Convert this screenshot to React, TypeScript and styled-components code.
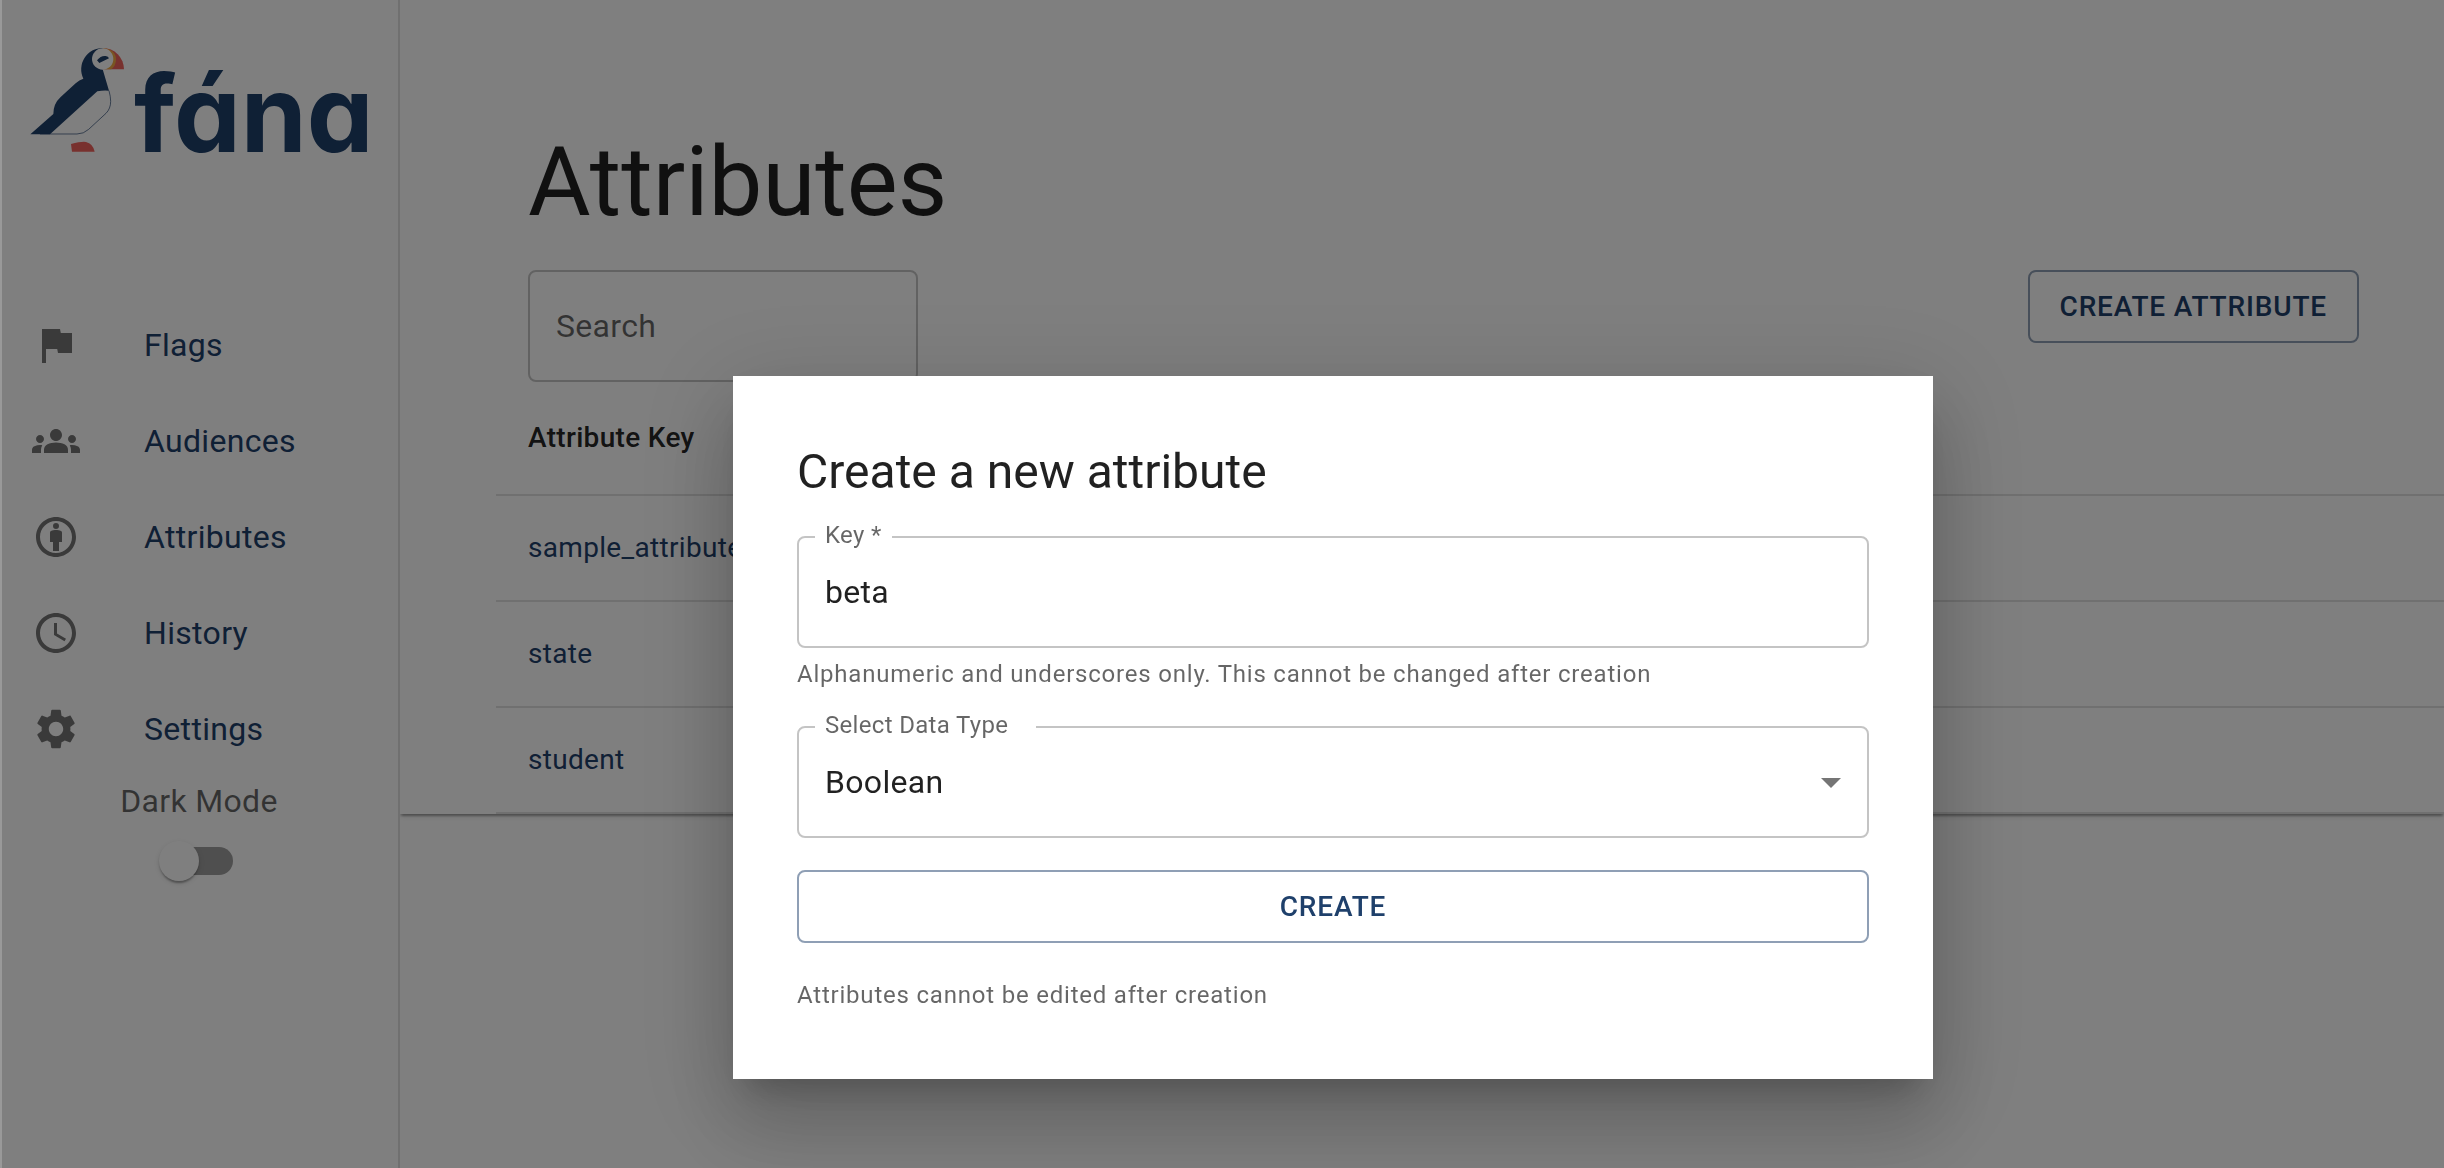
import React, { useState } from "react";
import styled, { createGlobalStyle, css } from "styled-components";

const color = {
  primary: "#1f406b",
  primaryBorder: "rgba(31, 64, 107, 0.5)",
  text: "rgba(0, 0, 0, 0.87)",
  textMuted: "rgba(0, 0, 0, 0.6)",
  icon: "rgba(0, 0, 0, 0.54)",
  outline: "rgba(0, 0, 0, 0.23)",
  divider: "#e0e0e0",
};

const GlobalStyle = createGlobalStyle`
  *, *::before, *::after { box-sizing: border-box; }
  body {
    margin: 0;
    background: #fff;
    color: ${color.text};
    font-family: Roboto, "Liberation Sans", sans-serif;
    font-size: 32px;
    line-height: 48px;
    letter-spacing: 0.01em;
    overflow: hidden;
  }
  button, input, select { font: inherit; letter-spacing: inherit; color: inherit; }
`;

const Shell = styled.div`
  display: flex;
  align-items: stretch;
  min-height: 100vh;
`;

const Sidebar = styled.aside`
  position: relative;
  z-index: 1;
  display: flex;
  flex-direction: column;
  flex: 0 0 400px;
  background: #fff;
  border-right: 2px solid ${color.divider};
`;

const Brand = styled.a`
  display: block;
  padding: 47px 0 0 30px;
  height: 297px;
`;

const NavList = styled.ul`
  list-style: none;
  margin: 0;
  padding: 0;
`;

const NavLink = styled.a`
  display: flex;
  align-items: center;
  height: 96px;
  padding: 0 32px;
  color: ${color.primary};
  text-decoration: none;
`;

const NavIcon = styled.svg`
  flex: none;
  width: 48px;
  height: 48px;
  margin-right: 64px;
  fill: ${color.icon};
`;

const ThemeToggle = styled.label`
  display: flex;
  flex-direction: column;
  align-items: center;
  color: ${color.textMuted};
`;

const Switch = styled.input`
  appearance: none;
  display: flex;
  align-items: center;
  width: 68px;
  height: 28px;
  margin: 22px 0;
  border-radius: 14px;
  background: #9e9e9e;

  &::before {
    content: "";
    flex: none;
    width: 40px;
    height: 40px;
    margin-left: -6px;
    border-radius: 50%;
    background: #fff;
    box-shadow: 0 4px 2px -2px rgba(0, 0, 0, 0.2), 0 2px 2px rgba(0, 0, 0, 0.14),
      0 2px 6px rgba(0, 0, 0, 0.12);
  }
  &:checked::before {
    margin-left: 34px;
  }
`;

const Main = styled.main`
  flex: 1;
  min-width: 0;
`;

const Paper = styled.section`
  padding: 126px 0 0 96px;
  box-shadow: 0 4px 2px -2px rgba(0, 0, 0, 0.2), 0 2px 2px rgba(0, 0, 0, 0.14),
    0 2px 6px rgba(0, 0, 0, 0.12);
`;

const PageTitle = styled.h1`
  margin: 0 0 32px;
  padding-left: 32px;
  font-size: 96px;
  line-height: 112px;
  font-weight: 400;
  letter-spacing: 0;
`;

const Toolbar = styled.div`
  display: flex;
  justify-content: space-between;
  align-items: flex-start;
  padding: 0 85px 0 32px;
`;

const outlined = css`
  height: 112px;
  padding: 0 26px;
  border: 2px solid ${color.outline};
  border-radius: 8px;
  background: transparent;
  outline: none;
`;

const SearchInput = styled.input`
  ${outlined}
  width: 390px;

  &::placeholder {
    color: ${color.textMuted};
    opacity: 1;
  }
`;

const OutlineButton = styled.button<{ $block?: boolean }>`
  width: ${(p) => (p.$block ? "100%" : "auto")};
  padding: 10px 30px;
  border: 2px solid ${color.primaryBorder};
  border-radius: 8px;
  background: transparent;
  color: ${color.primary};
  font-size: 28px;
  line-height: 49px;
  font-weight: 500;
  letter-spacing: 0.03em;
  text-transform: uppercase;
`;

const Table = styled.table`
  width: 100%;
  border-collapse: separate;
  border-spacing: 0;
  font-size: 28px;
  text-align: left;
`;

const HeadCell = styled.th`
  padding: 32px;
  border-bottom: 2px solid ${color.divider};
  line-height: 48px;
  font-weight: 500;
`;

const Cell = styled.td`
  padding: 32px;
  border-bottom: 2px solid ${color.divider};
  line-height: 40px;
`;

const KeyLink = styled.a`
  color: ${color.primary};
  text-decoration: none;
`;

const Backdrop = styled.div`
  position: fixed;
  inset: 0;
  z-index: 2;
  display: flex;
  justify-content: center;
  align-items: center;
  padding: 287px 0 0 220px;
  border-left: 2px solid rgba(255, 255, 255, 0.2);
  background: rgba(0, 0, 0, 0.5);
`;

const Dialog = styled.form`
  display: flex;
  flex-direction: column;
  gap: 32px;
  width: 1200px;
  padding: 64px;
  background: #fff;
  box-shadow: 0 22px 30px -14px rgba(0, 0, 0, 0.2),
    0 48px 76px 6px rgba(0, 0, 0, 0.14), 0 18px 92px 16px rgba(0, 0, 0, 0.12);
`;

const DialogTitle = styled.h2`
  margin: 0;
  font-size: 48px;
  line-height: 64px;
  font-weight: 400;
  letter-spacing: 0;
`;

const Field = styled.div`
  position: relative;
  display: flex;
  flex-direction: column;
  gap: 6px;
`;

const FieldLabel = styled.label<{ $wide?: boolean }>`
  position: absolute;
  top: -13px;
  left: 18px;
  padding: 0 ${(p) => (p.$wide ? 28 : 10)}px 0 10px;
  background: #fff;
  color: ${color.textMuted};
  font-size: 24px;
  line-height: 24px;
`;

const TextInput = styled.input`
  ${outlined}
  width: 100%;
`;

const SelectInput = styled.select`
  ${outlined}
  appearance: none;
  width: 100%;
`;

const SelectArrow = styled.svg`
  position: absolute;
  top: 32px;
  right: 14px;
  width: 48px;
  height: 48px;
  fill: ${color.icon};
  pointer-events: none;
`;

const Caption = styled.p`
  margin: 0;
  color: ${color.textMuted};
  font-size: 24px;
  line-height: 40px;
  letter-spacing: 0.033em;
`;

const Wordmark = styled.text`
  font-family: Inter, Lato, sans-serif;
  font-size: 106px;
  font-weight: 700;
  font-feature-settings: "cv11";
  letter-spacing: 0;
  fill: ${color.primary};
`;

const Logo = () => (
  <svg width="360" height="150" viewBox="0 0 360 150" role="img" aria-label="fána">
    <g transform="scale(0.33333) translate(-90 -81)">
      <path d="M308 84A64 64 0 0 1 372 148H308Z" fill="#f0625c" />
      <path d="M308 84Q348 88 348 118Q348 138 334 148H308Z" fill="#f2aa45" />
      <path
        d="M308 84A64 64 0 0 0 250 176Q238 180 227 190L182 231Q160 251 160 282L91 343H150L292 214Q310 210 327 212L308 148Z"
        fill={color.primary}
      />
      <circle cx="308" cy="117" r="32" fill="#fff" />
      <path d="M291 121Q303 106 317 108Q325 109 327 115L298 129Z" fill={color.primary} />
      <path
        d="M327 212Q332 230 332 244Q332 266 318 280L266 328Q251 342 231 342H120"
        fill="none"
        stroke={color.primary}
        strokeWidth="2"
      />
      <path d="M213 372Q244 364 258 366Q279 371 284 395H216Z" fill="#f0625c" />
    </g>
    <Wordmark x="104" y="105">
      fána
    </Wordmark>
  </svg>
);

const NAV = [
  { label: "Flags", d: "M14.4 6 14 4H5v17h2v-7h5.6l.4 2h7V6z" },
  {
    label: "Audiences",
    d: "M12 12.75c1.63 0 3.07.39 4.24.9 1.08.48 1.76 1.56 1.76 2.73V18H6v-1.61c0-1.18.68-2.26 1.76-2.73 1.17-.52 2.61-.91 4.24-.91zM4 13c1.1 0 2-.9 2-2s-.9-2-2-2-2 .9-2 2 .9 2 2 2zm1.13 1.1c-.37-.06-.74-.1-1.13-.1-.99 0-1.93.21-2.78.58C.48 14.9 0 15.62 0 16.43V18h4.5v-1.61c0-.83.23-1.61.63-2.29zM20 13c1.1 0 2-.9 2-2s-.9-2-2-2-2 .9-2 2 .9 2 2 2zm4 3.43c0-.81-.48-1.53-1.22-1.85-.85-.37-1.79-.58-2.78-.58-.39 0-.76.04-1.13.1.4.68.63 1.46.63 2.29V18H24v-1.57zM12 6c1.66 0 3 1.34 3 3s-1.34 3-3 3-3-1.34-3-3 1.34-3 3-3z",
  },
  {
    label: "Attributes",
    d: "M12 2C6.48 2 2 6.48 2 12s4.48 10 10 10 10-4.48 10-10S17.52 2 12 2zm0 18c-4.41 0-8-3.59-8-8s3.59-8 8-8 8 3.59 8 8-3.59 8-8 8zM13.5 6.5a1.5 1.5 0 1 1-3 0 1.5 1.5 0 0 1 3 0zM12 8.5c-.91 0-1.82.2-2.5.5-.3.13-.5.42-.5.75V14.5h1.5V19h3v-4.5H15V9.75c0-.33-.2-.62-.5-.75-.68-.3-1.59-.5-2.5-.5z",
  },
  {
    label: "History",
    d: "M11.99 2C6.47 2 2 6.48 2 12s4.47 10 9.99 10C17.52 22 22 17.52 22 12S17.52 2 11.99 2zM12 20c-4.42 0-8-3.58-8-8s3.58-8 8-8 8 3.58 8 8-3.58 8-8 8zm.5-13H11v6l5.25 3.15.75-1.23-4.5-2.67z",
  },
  {
    label: "Settings",
    d: "M19.14 12.94c.04-.3.06-.61.06-.94 0-.32-.02-.64-.07-.94l2.03-1.58c.18-.14.23-.41.12-.61l-1.92-3.32c-.12-.22-.37-.29-.59-.22l-2.39.96c-.5-.38-1.03-.7-1.62-.94l-.36-2.54c-.04-.24-.24-.41-.48-.41h-3.84c-.24 0-.43.17-.47.41l-.36 2.54c-.59.24-1.13.57-1.62.94l-2.39-.96c-.22-.08-.47 0-.59.22L2.74 8.87c-.12.21-.08.47.12.61l2.03 1.58c-.05.3-.09.63-.09.94s.02.64.07.94l-2.03 1.58c-.18.14-.23.41-.12.61l1.92 3.32c.12.22.37.29.59.22l2.39-.96c.5.38 1.03.7 1.62.94l.36 2.54c.05.24.24.41.48.41h3.84c.24 0 .44-.17.47-.41l.36-2.54c.59-.24 1.13-.56 1.62-.94l2.39.96c.22.08.47 0 .59-.22l1.92-3.32c.12-.22.07-.47-.12-.61l-2.01-1.58zM12 15.6c-1.98 0-3.6-1.62-3.6-3.6s1.62-3.6 3.6-3.6 3.6 1.62 3.6 3.6-1.62 3.6-3.6 3.6z",
  },
];

const ATTRIBUTES = ["sample_attribute", "state", "student"];

export default function App() {
  const [key, setKey] = useState("beta");
  const [dataType, setDataType] = useState("Boolean");

  return (
    <>
      <GlobalStyle />
      <Shell>
        <Sidebar>
          <Brand href="#">
            <Logo />
          </Brand>
          <nav>
            <NavList>
              {NAV.map((item) => (
                <li key={item.label}>
                  <NavLink href="#">
                    <NavIcon viewBox="0 0 24 24" aria-hidden="true">
                      <path d={item.d} />
                    </NavIcon>
                    {item.label}
                  </NavLink>
                </li>
              ))}
            </NavList>
          </nav>
          <ThemeToggle>
            Dark Mode
            <Switch type="checkbox" />
          </ThemeToggle>
        </Sidebar>
        <Main>
          <Paper>
            <PageTitle>Attributes</PageTitle>
            <Toolbar>
              <SearchInput type="search" placeholder="Search" aria-label="Search" />
              <OutlineButton type="button">Create Attribute</OutlineButton>
            </Toolbar>
            <Table>
              <thead>
                <tr>
                  <HeadCell scope="col">Attribute Key</HeadCell>
                </tr>
              </thead>
              <tbody>
                {ATTRIBUTES.map((name) => (
                  <tr key={name}>
                    <Cell>
                      <KeyLink href="#">{name}</KeyLink>
                    </Cell>
                  </tr>
                ))}
              </tbody>
            </Table>
          </Paper>
        </Main>
      </Shell>
      <Backdrop>
        <Dialog
          role="dialog"
          aria-modal="true"
          aria-labelledby="dialog-title"
          onSubmit={(e) => e.preventDefault()}
        >
          <DialogTitle id="dialog-title">Create a new attribute</DialogTitle>
          <Field>
            <TextInput
              id="attribute-key"
              required
              value={key}
              onChange={(e) => setKey(e.target.value)}
              aria-describedby="key-help"
            />
            <FieldLabel htmlFor="attribute-key">Key *</FieldLabel>
            <Caption id="key-help">
              Alphanumeric and underscores only. This cannot be changed after creation
            </Caption>
          </Field>
          <Field>
            <SelectInput
              id="data-type"
              value={dataType}
              onChange={(e) => setDataType(e.target.value)}
            >
              <option>Boolean</option>
            </SelectInput>
            <FieldLabel htmlFor="data-type" $wide>
              Select Data Type
            </FieldLabel>
            <SelectArrow viewBox="0 0 24 24" aria-hidden="true">
              <path d="M7 10l5 5 5-5z" />
            </SelectArrow>
          </Field>
          <OutlineButton type="submit" $block>
            Create
          </OutlineButton>
          <Caption>Attributes cannot be edited after creation</Caption>
        </Dialog>
      </Backdrop>
    </>
  );
}
